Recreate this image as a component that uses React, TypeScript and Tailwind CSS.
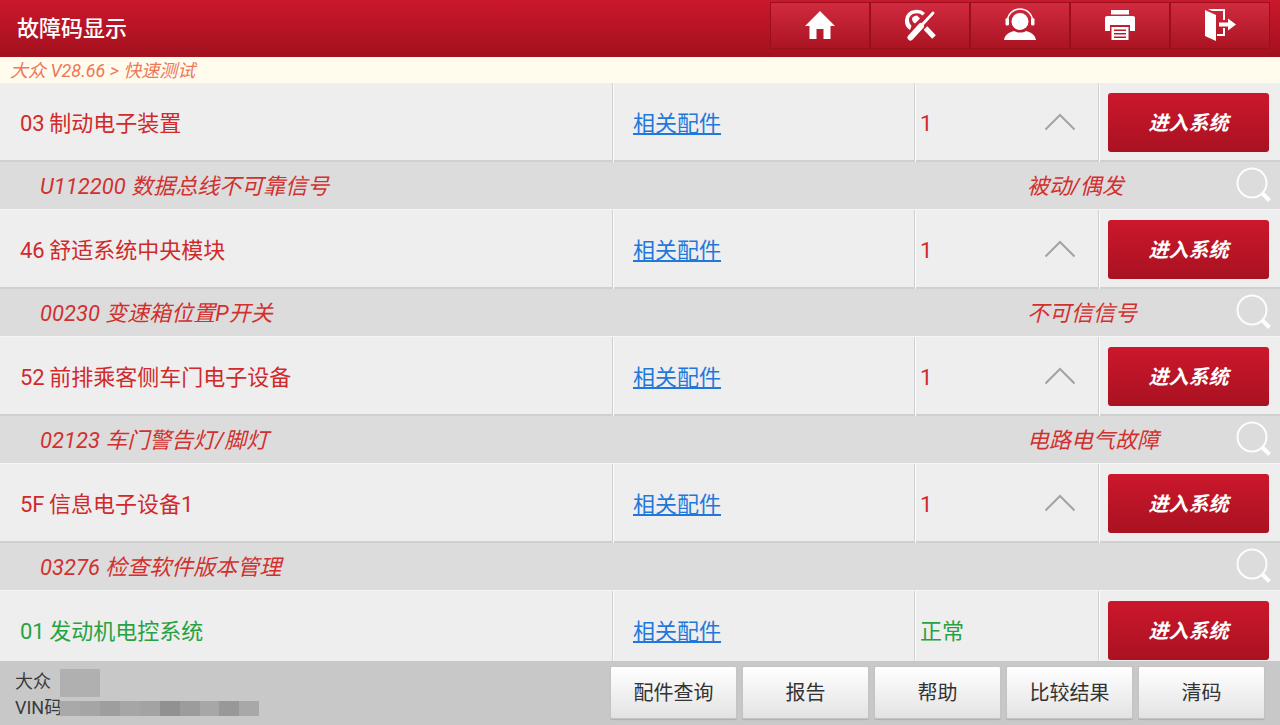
import React from "react";

const FONT = "font-['Roboto','Noto_Sans_CJK_SC',sans-serif]";

const HomeIcon = () => (
  <svg width="32" height="32" viewBox="0 0 32 32" fill="#fff">
    <path d="M16 2 L31 17 L26.5 17 L26.5 30 L19.5 30 L19.5 20 L12.5 20 L12.5 30 L5.5 30 L5.5 17 L1 17 Z" />
  </svg>
);

const ToolsIcon = () => (
  <svg width="32" height="32" viewBox="0 0 32 32" fill="none">
    <path d="M6 21 A10.5 10.5 0 0 1 1 11 A10.5 10.5 0 0 1 11 1 A12 12 0 0 1 21 4 L18.5 6.5 A8 8 0 0 0 11 4.5 A6.5 6.5 0 0 0 5 11 A8 8 0 0 0 7.5 17 Z" fill="#fff" />
    <path d="M8 9 A6 6 0 0 1 13 6.5 L16 9.5 L11 14.5 A6 6 0 0 1 8 9 Z" fill="#fff" />
    <path d="M17 17 L29 4" stroke="#c21a2e" strokeWidth="6" />
    <path d="M6.5 28.5 L17 17" stroke="#fff" strokeWidth="6" strokeLinecap="round" />
    <path d="M17 17 L29 4" stroke="#fff" strokeWidth="3" strokeLinecap="round" />
    <path d="M21.5 19 L30 28" stroke="#fff" strokeWidth="5" />
  </svg>
);

const AgentIcon = () => (
  <svg width="34" height="34" viewBox="0 0 34 34" fill="none">
    <circle cx="17" cy="13.5" r="8.5" fill="#fff" />
    <path d="M4.5 13 A12.5 12 0 0 1 29.5 13" stroke="#fff" strokeWidth="1.6" />
    <rect x="2.5" y="10" width="3.5" height="7.5" rx="1.5" fill="#fff" />
    <rect x="28" y="10" width="3.5" height="7.5" rx="1.5" fill="#fff" />
    <path d="M1 32 C2 26 7 24 11 23 C14 25 20 25 23 23 C27 24 32 26 33 32 Z" fill="#fff" />
  </svg>
);

const PrintIcon = () => (
  <svg width="32" height="32" viewBox="0 0 32 32" fill="#fff">
    <rect x="7" y="1" width="18" height="4.5" />
    <path d="M3 7 H29 A2 2 0 0 1 31 9 V22 H26 V16 H6 V22 H1 V9 A2 2 0 0 1 3 7 Z" />
    <path d="M7.5 18 H24.5 V31 H7.5 Z M10 20.5 V22 H22 V20.5 Z M10 24 V25.5 H22 V24 Z M10 27.5 V29 H22 V27.5 Z" fillRule="evenodd" />
  </svg>
);

const ExitIcon = () => (
  <svg width="34" height="34" viewBox="0 0 34 34" fill="#fff">
    <path d="M2 2 L13 7 V33 L2 28 Z" />
    <path d="M5 1 H22 V12 H20 V3 H9 Z M20 20 H22 V28 H14 V26 H20 Z" />
    <path d="M16 14.5 H25 V10.5 L33 16.5 L25 22.5 V18.5 H16 Z" />
  </svg>
);

const headerIcons = [HomeIcon, ToolsIcon, AgentIcon, PrintIcon, ExitIcon];

const SearchIcon = () => (
  <svg width="36" height="36" viewBox="0 0 36 36" fill="none" className="opacity-95">
    <circle cx="16" cy="16" r="14.5" stroke="#fff" strokeWidth="2" />
    <path d="M26.5 26.5 L33.5 33.5" stroke="#fff" strokeWidth="4" />
  </svg>
);

const Chevron = () => (
  <svg width="30" height="18" viewBox="0 0 30 18" fill="none" className="-mt-[4px]">
    <path d="M0.5 16.5 L15 2 L29.5 16.5" stroke="#a3a3a3" strokeWidth="2" />
  </svg>
);

const SystemRow = ({ name, status, ok }: { name: string; status: string; ok?: boolean }) => {
  const color = ok ? "text-[#27a243]" : "text-[#d02a2c]";
  return (
    <div className="flex h-[79px] shrink-0 gap-[1px] bg-[#fbfbfb]">
      <div className={`flex w-[613px] items-center border-r border-b-2 border-[#d0d0d0] bg-[#eeeeee] pl-5 pt-[4px] text-[22px] [word-spacing:-1px] ${color}`}>
        {name}
      </div>
      <div className="flex w-[301px] items-center border-r border-b-2 border-[#d0d0d0] bg-[#eeeeee] pl-[19px] pt-[4px] text-[22px] text-[#1f78dc] underline underline-offset-2">
        相关配件
      </div>
      <div className={`flex w-[183px] items-center justify-between border-r border-b-2 border-[#d0d0d0] bg-[#eeeeee] pl-[4px] pr-[23px] pt-[4px] text-[22px] ${color}`}>
        <span>{status}</span>
        {!ok && <Chevron />}
      </div>
      <div className="flex flex-1 items-center justify-center border-b-2 border-[#d0d0d0] bg-[#eeeeee] pl-[8px] pr-[11px] pt-[2px]">
        <button className="flex h-[59px] w-full items-center justify-center rounded-[3px] bg-gradient-to-b from-[#cc172c] to-[#a91221] text-[20px] font-bold italic text-white">
          进入系统
        </button>
      </div>
    </div>
  );
};

const FaultRow = ({ text, state }: { text: string; state?: string }) => (
  <div className="relative flex h-[48px] shrink-0 items-center border-b border-[#f5f5f5] bg-[#dcdcdc] pl-10 pt-[2px] text-[22px] italic text-[#d2302f]">
    <span>{text}</span>
    {state && <span className="absolute left-[1027px]">{state}</span>}
    <span className="absolute right-[8px] top-[5px]">
      <SearchIcon />
    </span>
  </div>
);

const FooterBtn = ({ label }: { label: string }) => (
  <button className="h-[53px] w-[127px] rounded-[2px] border border-[#c4c4c4] bg-gradient-to-b from-[#ffffff] to-[#e3e3e3] text-[20px] text-[#333333] shadow-[0_1px_1px_#b0b0b0]">
    {label}
  </button>
);

const mosaic = ["#a9a9a9", "#a5a5a5", "#9e9e9e", "#a6a6a6", "#a3a3a3", "#919191", "#9c9c9c", "#a7a7a7", "#989898", "#a8a8a8"];

export default function App() {
  return (
    <div className={`flex h-[725px] w-[1280px] flex-col overflow-hidden bg-[#fbfbfb] ${FONT}`}>
      {/* title bar */}
      <div className="flex h-[57px] shrink-0 items-center justify-between bg-gradient-to-b from-[#cb172c] to-[#a3111e] pl-[17px] pr-[10px]">
        <span className="text-[22px] font-medium text-white">故障码显示</span>
        <div className="mb-[7px] flex h-[47px] w-[500px] border border-[#9b0f1c]">
          {headerIcons.map((Icon, i) => (
            <div
              key={i}
              className={`flex h-full flex-1 items-center justify-center bg-gradient-to-b from-[#d12a3f] to-[#ab1422] ${i > 0 ? "border-l-2 border-[#9b0f1c]" : ""}`}
            >
              <Icon />
            </div>
          ))}
        </div>
      </div>

      {/* breadcrumb */}
      <div className="flex h-[26px] shrink-0 items-center bg-[#fffcee] pl-[10px] text-[18px] italic text-[#ef7757]">
        大众 V28.66 &gt; 快速测试
      </div>

      {/* list */}
      <div className="flex min-h-0 flex-1 flex-col overflow-hidden">
        <SystemRow name="03 制动电子装置" status="1" />
        <FaultRow text="U112200 数据总线不可靠信号" state="被动/偶发" />
        <SystemRow name="46 舒适系统中央模块" status="1" />
        <FaultRow text="00230 变速箱位置P开关" state="不可信信号" />
        <SystemRow name="52 前排乘客侧车门电子设备" status="1" />
        <FaultRow text="02123 车门警告灯/脚灯" state="电路电气故障" />
        <SystemRow name="5F 信息电子设备1" status="1" />
        <FaultRow text="03276 检查软件版本管理" />
        <SystemRow name="01 发动机电控系统" status="正常" ok />
      </div>

      {/* footer */}
      <div className="flex h-[64px] shrink-0 items-start justify-between bg-[#c8c8c8] pl-[15px] pr-[15px] pt-[6px]">
        <div className="pt-[2px] text-[18px] leading-[26px] text-[#3a3a3a]">
          <div className="flex h-[26px] items-center gap-[9px]">
            <span>大众</span>
            <span className="mt-[1px] h-[28px] w-[40px] bg-[#b0b0b0]" />
          </div>
          <div className="flex h-[26px] items-center">
            <span>VIN码</span>
            <span className="-ml-[2px] flex h-[15px] w-[199px]">
              {mosaic.map((c, i) => (
                <span key={i} className="h-full flex-1" style={{ backgroundColor: c }} />
              ))}
            </span>
          </div>
        </div>
        <div className="-mt-[1px] flex gap-[5px]">
          <FooterBtn label="配件查询" />
          <FooterBtn label="报告" />
          <FooterBtn label="帮助" />
          <FooterBtn label="比较结果" />
          <FooterBtn label="清码" />
        </div>
      </div>
    </div>
  );
}
